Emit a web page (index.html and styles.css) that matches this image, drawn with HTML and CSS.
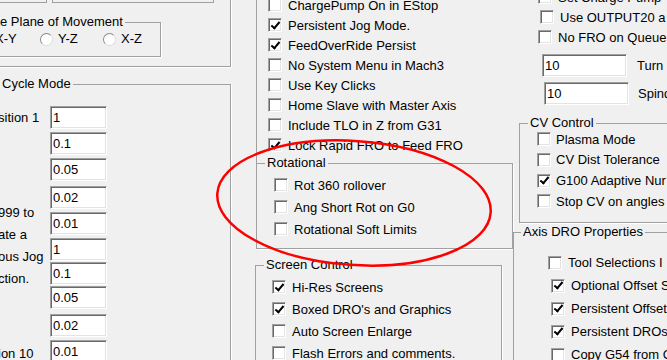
FILE: index.html
```html
<!DOCTYPE html>
<html lang="en">
<head>
  <meta charset="UTF-8" />
  <meta name="viewport" content="width=device-width, initial-scale=1" />
  <title>Mach3 - General Config</title>
  <link rel="stylesheet" href="styles.css">
</head>
<body>
  <div class="col-left">
    <div class="group sys">
      <div class="box-row">
        <div class="box box-a"></div>
        <div class="box box-b"></div>
      </div>
      <div class="group plane">
        <div class="group-title">e Plane of Movement</div>
        <div class="radios">
          <label class="radio"><span class="dot"></span>X-Y</label>
          <label class="radio"><span class="dot"></span>Y-Z</label>
          <label class="radio"><span class="dot"></span>X-Z</label>
        </div>
      </div>
    </div>

    <div class="group cycle">
      <div class="group-title">Cycle Mode</div>
      <div class="cycle-body">
        <div class="cycle-labels">
          <div class="pos-label">sition 1</div>
          <div class="note">999 to<br>ate a<br>ous Jog<br>ction.</div>
          <div class="pos-label last">ion 10</div>
        </div>
        <div class="cycle-inputs">
          <input class="num" type="text" value="1">
          <input class="num" type="text" value="0.1">
          <input class="num" type="text" value="0.05">
          <input class="num gap-lg" type="text" value="0.02">
          <input class="num" type="text" value="0.01">
          <input class="num" type="text" value="1">
          <input class="num gap-sm" type="text" value="0.1">
          <input class="num gap-sm" type="text" value="0.05">
          <input class="num gap-lg" type="text" value="0.02">
          <input class="num" type="text" value="0.01">
        </div>
      </div>
    </div>
  </div>

  <div class="col-mid">
    <div class="mid-top">
      <div class="check-row"><span class="chk"></span>ChargePump On in EStop</div>
      <div class="check-row"><span class="chk on"></span>Persistent Jog Mode.</div>
      <div class="check-row"><span class="chk on"></span>FeedOverRide Persist</div>
      <div class="check-row"><span class="chk"></span>No System Menu in Mach3</div>
      <div class="check-row"><span class="chk"></span>Use Key Clicks</div>
      <div class="check-row"><span class="chk"></span>Home Slave with Master Axis</div>
      <div class="check-row"><span class="chk"></span>Include TLO in Z from G31</div>
      <div class="check-row"><span class="chk on"></span>Lock Rapid FRO to Feed FRO</div>
    </div>

    <div class="group rot">
      <div class="group-title">Rotational</div>
      <div class="rows">
        <div class="check-row tall"><span class="chk"></span>Rot 360 rollover</div>
        <div class="check-row tall"><span class="chk"></span>Ang Short Rot on G0</div>
        <div class="check-row tall"><span class="chk"></span>Rotational Soft Limits</div>
      </div>
    </div>

    <div class="group screen">
      <div class="group-title">Screen Control</div>
      <div class="rows">
        <div class="check-row tall"><span class="chk on"></span>Hi-Res Screens</div>
        <div class="check-row tall"><span class="chk on"></span>Boxed DRO's and Graphics</div>
        <div class="check-row tall"><span class="chk"></span>Auto Screen Enlarge</div>
        <div class="check-row tall"><span class="chk"></span>Flash Errors and comments.</div>
      </div>
    </div>
  </div>

  <div class="col-right">
    <div class="top-rows">
      <div class="check-row"><span class="chk"></span>Set Charge Pump</div>
      <div class="check-row nudge"><span class="chk"></span>Use OUTPUT20 a</div>
      <div class="check-row"><span class="chk"></span>No FRO on Queue</div>
    </div>
    <div class="num-row"><input class="num wide" type="text" value="10">Turn</div>
    <div class="num-row second"><input class="num wide" type="text" value="10">Spind</div>

    <div class="group cv">
      <div class="group-title">CV Control</div>
      <div class="rows">
        <div class="check-row cv-row"><span class="chk"></span>Plasma Mode</div>
        <div class="check-row cv-row"><span class="chk"></span>CV Dist Tolerance</div>
        <div class="check-row cv-row"><span class="chk on"></span>G100 Adaptive Nur</div>
        <div class="check-row cv-row"><span class="chk"></span>Stop CV on angles</div>
      </div>
    </div>

    <div class="group axis">
      <div class="group-title">Axis DRO Properties</div>
      <div class="rows">
        <div class="check-row dro-row first"><span class="chk"></span>Tool Selections I</div>
        <div class="check-row dro-row"><span class="chk on"></span>Optional Offset S</div>
        <div class="check-row dro-row"><span class="chk on"></span>Persistent Offset</div>
        <div class="check-row dro-row"><span class="chk on"></span>Persistent DROs</div>
        <div class="check-row dro-row"><span class="chk"></span>Copy G54 from G</div>
      </div>
    </div>
  </div>

  <svg class="mark" width="667" height="360" viewBox="0 0 667 360">
    <ellipse cx="354" cy="203" rx="137" ry="62" transform="rotate(4 354 203)" />
  </svg>
</body>
</html>
```

FILE: styles.css
```css
:root {
  --face: #f0f0f0;
  --edge: #a0a0a0;
  --dark: #696969;
  --light: #e3e3e3;
}

* {
  box-sizing: border-box;
}

body {
  margin: 0;
  width: 667px;
  height: 360px;
  overflow: hidden;
  position: relative;
  display: flex;
  align-items: flex-start;
  background: var(--face);
  font-family: "Liberation Sans", Arial, sans-serif;
  font-size: 13px;
  color: #000;
}

/* group boxes */
.group {
  border: 1px solid var(--edge);
  box-shadow: 1px 1px 0 #fff;
}

.group-title {
  display: table;
  margin: -9px 0 0 8px;
  padding: 0 2px;
  line-height: 16px;
  background: var(--face);
  white-space: nowrap;
}

/* checkboxes */
.check-row {
  display: flex;
  align-items: center;
  gap: 6px;
  height: 20px;
  white-space: nowrap;
}

.check-row.tall {
  height: 22px;
}

.chk {
  flex: none;
  display: flex;
  align-items: center;
  justify-content: center;
  width: 14px;
  height: 14px;
  background: #fff;
  border: 1px solid;
  border-color: var(--edge) #fff #fff var(--edge);
  box-shadow: inset 1px 1px 0 var(--dark), inset -1px -1px 0 var(--light);
}

.chk.on::after {
  content: "";
  width: 3px;
  height: 7px;
  margin-top: -2px;
  border: solid #000;
  border-width: 0 2px 2px 0;
  transform: rotate(40deg);
}

/* text boxes */
.num {
  display: block;
  width: 57px;
  height: 23px;
  margin: 3px 0 0;
  padding: 0 0 0 2px;
  font: inherit;
  color: #000;
  background: #fff;
  border: 1px solid;
  border-color: var(--edge) #fff #fff var(--edge);
  box-shadow: inset 1px 1px 0 var(--dark), inset -1px -1px 0 var(--light);
  outline: none;
}

/* left column */
.col-left {
  flex: none;
  width: 293px;
  margin: -40px 0 0 -62px;
}

.sys {
  height: 107px;
}

.box-row {
  display: flex;
  gap: 5px;
  margin: 19px 0 0 21px;
}

.box {
  height: 23px;
  border: 1px solid var(--edge);
}

.box-a {
  width: 87px;
}

.box-b {
  width: 162px;
}

.plane {
  width: 201px;
  height: 35px;
  margin: 19px 0 0 21px;
}

.plane .group-title {
  margin-left: 37px;
}

.radios {
  display: grid;
  grid-template-columns: repeat(3, 63px);
  margin-top: 1px;
  padding-left: 16px;
  line-height: 16px;
}

.radio {
  display: flex;
  align-items: center;
  gap: 5px;
}

.dot {
  flex: none;
  width: 13px;
  height: 13px;
  border-radius: 50%;
  background: #fff;
  border: 1px solid;
  border-color: #8a8a8a #dcdcdc #dcdcdc #8a8a8a;
}

.cycle {
  height: 300px;
  margin-top: 17px;
}

.cycle .group-title {
  margin-left: 61px;
}

.cycle-body {
  display: flex;
  margin: 14px 0 0 59px;
}

.cycle-labels {
  flex: none;
  width: 52px;
  white-space: nowrap;
}

.pos-label {
  line-height: 23px;
}

.pos-label.last {
  margin-top: 52px;
}

.note {
  margin-top: 73px;
  line-height: 22px;
}

.cycle-inputs .num:first-child {
  margin-top: 0;
}

.num.gap-lg {
  margin-top: 5px;
}

.num.gap-sm {
  margin-top: 1px;
}

/* middle column */
.col-mid {
  flex: none;
  width: 257px;
  margin: -15px 0 0 25px;
}

.mid-top {
  height: 178px;
  padding: 10px 0 0 11px;
  border-left: 1px solid var(--edge);
}

.rot {
  height: 86px;
}

.rot .rows {
  margin-top: 3px;
  padding-left: 17px;
}

.screen {
  width: 247px;
  height: 140px;
  margin: 16px 0 0 -1px;
}

.screen .rows {
  margin-top: 3px;
  padding-left: 16px;
}

/* right column */
.col-right {
  flex: none;
  width: 220px;
  margin-top: -13px;
}

.top-rows {
  padding-left: 25px;
}

.check-row.nudge {
  padding-left: 2px;
}

.num-row {
  display: flex;
  align-items: center;
  gap: 10px;
  margin: 7px 0 0 29px;
  white-space: nowrap;
}

.num-row.second {
  gap: 9px;
  margin: 5px 0 0 31px;
}

.num.wide {
  width: 85px;
  margin: 0;
}

.cv {
  height: 100px;
  margin: 18px 0 0 6px;
}

.cv .rows {
  margin-top: -2px;
  padding-left: 17px;
}

.cv-row {
  gap: 5px;
  height: 20.67px;
}

.axis {
  height: 200px;
  margin-top: 9px;
}

.axis .group-title {
  margin-left: 7px;
}

.axis .rows {
  margin-top: 11px;
  padding-left: 37px;
}

.dro-row {
  height: 23px;
}

.dro-row.first {
  margin-left: -3px;
}

/* red highlight drawn over the dialog */
.mark {
  position: absolute;
  top: 0;
  left: 0;
  pointer-events: none;
}

.mark ellipse {
  fill: none;
  stroke: #f00;
  stroke-width: 2.5;
}
```
